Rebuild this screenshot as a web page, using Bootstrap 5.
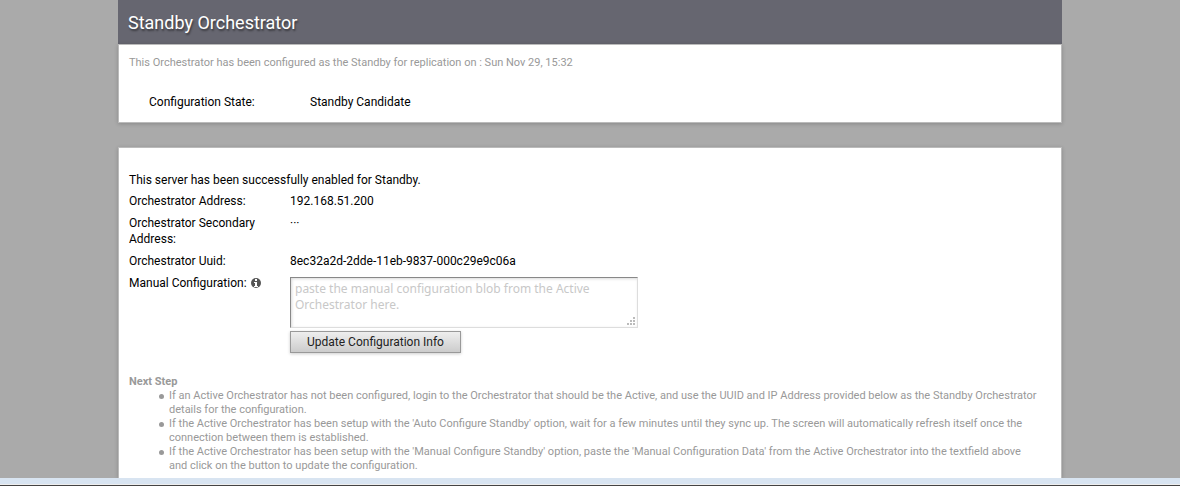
<!DOCTYPE html>
<html lang="en">
<head>
<meta charset="utf-8">
<meta name="viewport" content="width=device-width, initial-scale=1">
<title>Standby Orchestrator</title>
<link href="https://cdn.jsdelivr.net/npm/bootstrap@5.3.0/dist/css/bootstrap.min.css" rel="stylesheet">
<style>
  body { background: #aaa; color: #000; font-family: Roboto, sans-serif; font-size: 12px; line-height: 16px; }
  .page { width: 80%; }
  .title-bar { background: #666670; padding: 9px 10px 7px; }
  .title-bar h1 { font-size: 18px; line-height: 28px; font-weight: 400; color: #fff; text-shadow: 1px 2px 2px rgba(0,0,0,.45); }
  .panel { background: #fff; border: 1px solid #bbb; box-shadow: 0 1px 4px rgba(0,0,0,.2); padding: 0 10px; }
  .panel-state { padding-top: 11px; padding-bottom: 12px; margin-bottom: 24px; }
  .panel-config { padding-top: 24px; border-bottom: 0; }
  .hint { color: #999; font-size: 11px; line-height: 14px; }
  .state { padding: 24px 20px 0; }
  .intro { margin-bottom: 5px; }
  .fields { row-gap: 6px; }
  .field-label { width: 161px; padding-right: 20px; flex: none; }
  .blob-area { padding-top: 2px; }
  .blob { display: block; width: 348px; height: 51px; resize: none; padding: 3px 4px; font: 12px/16px "Noto Sans", sans-serif; color: #000; background: #fff; border: 1px solid #ddd; border-top-color: #888; border-left-color: #888; border-radius: 0; box-shadow: inset 1px 1px 3px rgba(0,0,0,.15); }
  .blob::placeholder { color: #c8c8c8; opacity: 1; }
  .blob:focus { background: #fff; }
  .grip { right: 2px; bottom: 2px; pointer-events: none; }
  .btn-update { width: 171px; padding: 1px 0 0; font-size: 12px; line-height: 19px; color: #222; background: linear-gradient(#eee, #ccc); border: 1px solid #999; border-radius: 0; box-shadow: 0 1px 3px rgba(0,0,0,.2); margin-top: 3px; }
  .btn-update:hover { background: #ddd; border-color: #888; color: #000; }
  .next-step { padding: 22px 12px 3px 0; }
  .next-step h2 { font-size: 11px; line-height: 14px; font-weight: 700; }
  .next-step ul { padding-left: 40px; list-style: none; }
  .next-step li { position: relative; }
  .next-step li::before { content: ""; position: absolute; left: -10px; top: 5px; width: 5px; height: 5px; border-radius: 50%; background: #999; }
  .status-strip { height: 8px; background: #d8e4f1; border-bottom: 1px solid #444; box-shadow: inset 0 -1px #eee; }
</style>
</head>
<body>
<div class="d-flex flex-column min-vh-100">
  <main class="page mx-auto flex-grow-1 d-flex flex-column">
    <header class="title-bar"><h1 class="m-0">Standby Orchestrator</h1></header>
    <section class="panel panel-state">
      <p class="hint m-0">This Orchestrator has been configured as the Standby for replication on : Sun Nov 29, 15:32</p>
      <dl class="state d-flex m-0">
        <dt class="field-label fw-normal">Configuration State:</dt>
        <dd class="m-0">Standby Candidate</dd>
      </dl>
    </section>
    <section class="panel panel-config flex-grow-1">
      <p class="intro">This server has been successfully enabled for Standby.</p>
      <form class="fields d-flex flex-column">
        <div class="d-flex"><span class="field-label">Orchestrator Address:</span><span>192.168.51.200</span></div>
        <div class="d-flex"><span class="field-label">Orchestrator Secondary Address:</span><span>···</span></div>
        <div class="d-flex"><span class="field-label">Orchestrator Uuid:</span><span>8ec32a2d-2dde-11eb-9837-000c29e9c06a</span></div>
        <div class="d-flex">
          <div class="field-label d-flex align-items-center align-self-start gap-1 pe-0">
            <label for="blob">Manual Configuration:</label>
            <svg width="10" height="10" viewBox="0 0 10 10" aria-hidden="true"><circle cx="5" cy="5" r="5" fill="#555"/><path d="M4 1h2v2H4zM3 4h3v4h1v1H3V8h1V5H3z" fill="#fff"/></svg>
          </div>
          <div class="blob-area">
            <div class="position-relative">
              <textarea class="blob" id="blob" placeholder="paste the manual configuration blob from the Active Orchestrator here."></textarea>
              <svg class="grip position-absolute" width="9" height="9" viewBox="0 0 9 9" aria-hidden="true"><path d="M6 0h2v2H6zM6 3h2v2H6zM3 3h2v2H3zM6 6h2v2H6zM3 6h2v2H3zM0 6h2v2H0z" fill="#bbb"/></svg>
            </div>
            <button type="button" class="btn btn-update">Update Configuration Info</button>
          </div>
        </div>
      </form>
      <div class="next-step hint">
        <h2 class="m-0">Next Step</h2>
        <ul class="m-0">
          <li>If an Active Orchestrator has not been configured, login to the Orchestrator that should be the Active, and use the UUID and IP Address provided below as the Standby Orchestrator details for the configuration.</li>
          <li>If the Active Orchestrator has been setup with the 'Auto Configure Standby' option, wait for a few minutes until they sync up. The screen will automatically refresh itself once the connection between them is established.</li>
          <li>If the Active Orchestrator has been setup with the 'Manual Configure Standby' option, paste the 'Manual Configuration Data' from the Active Orchestrator into the textfield above and click on the button to update the configuration.</li>
        </ul>
      </div>
    </section>
  </main>
  <div class="status-strip"></div>
</div>
<script src="https://cdn.jsdelivr.net/npm/bootstrap@5.3.0/dist/js/bootstrap.bundle.min.js"></script>
</body>
</html>
